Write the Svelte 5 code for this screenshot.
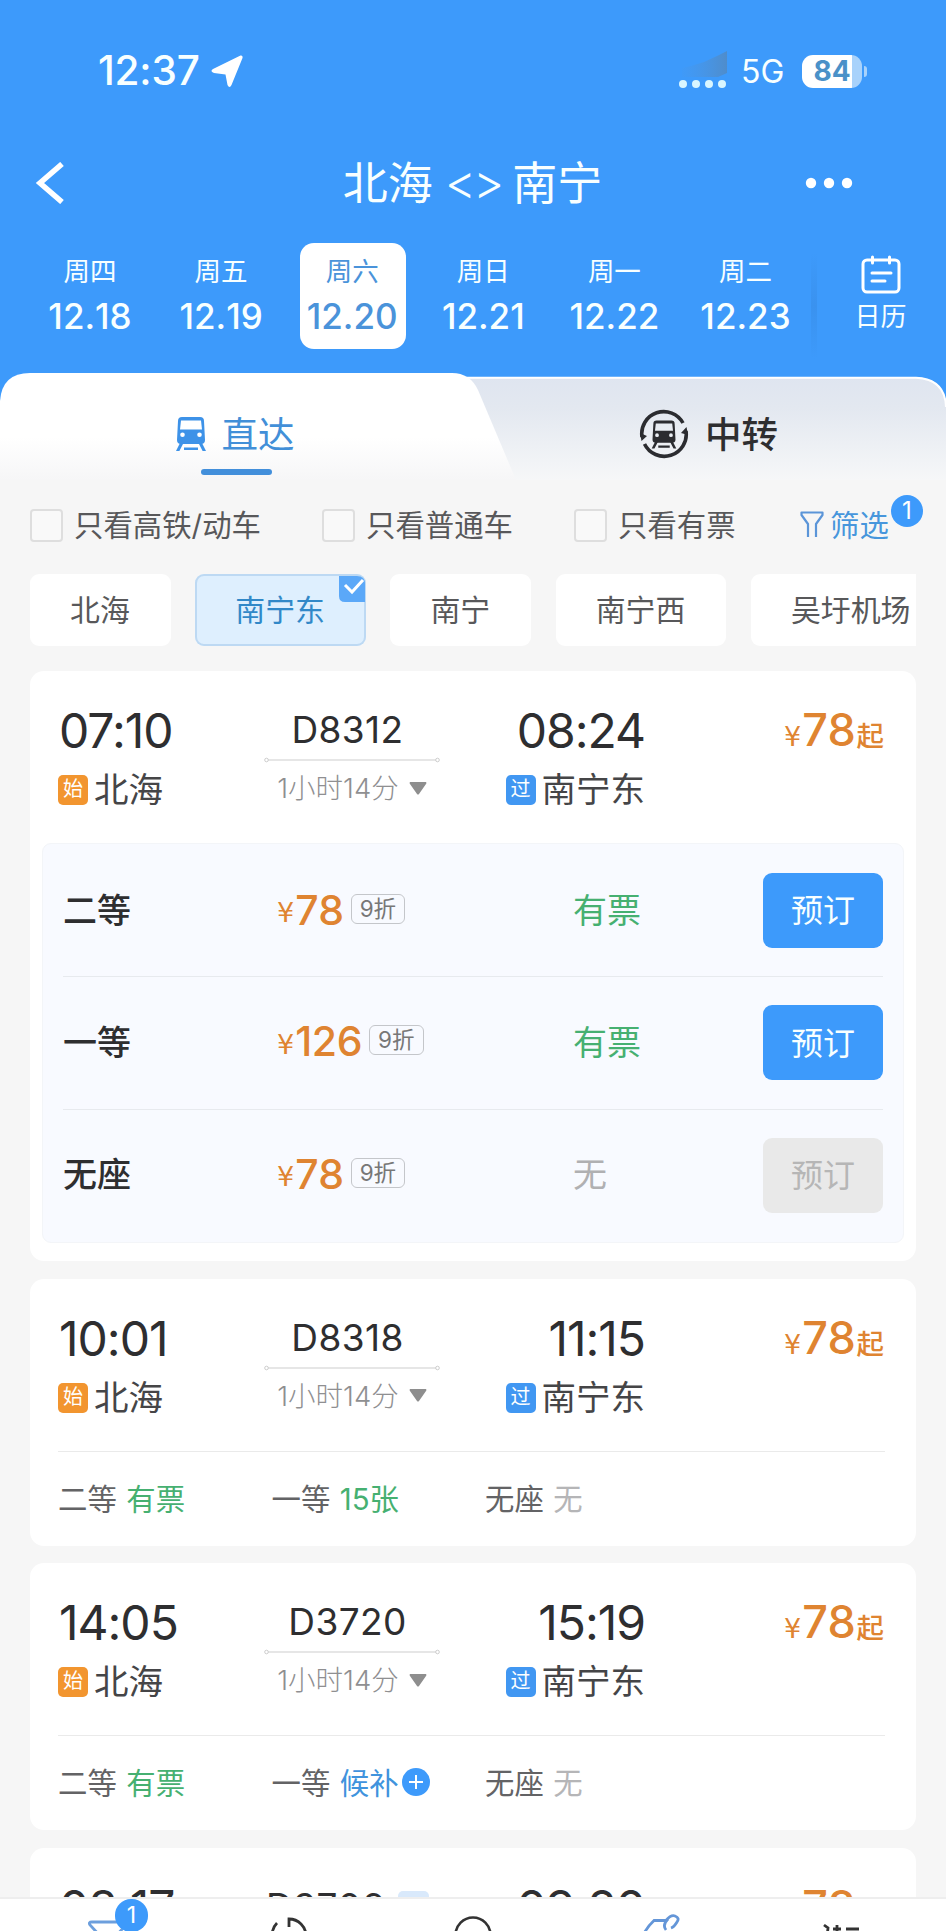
<script>
  const dates = [
    ['周四', '12.18'], ['周五', '12.19'], ['周六', '12.20'],
    ['周日', '12.21'], ['周一', '12.22'], ['周二', '12.23']
  ];
  const stations = ['北海', '南宁东', '南宁', '南宁西', '吴圩机场'];
  const classes = [
    { name: '二等', price: '78', state: '有票', open: true },
    { name: '一等', price: '126', state: '有票', open: true },
    { name: '无座', price: '78', state: '无', open: false }
  ];
  const trains = [
    { dep: '07:10', no: 'D8312', arr: '08:24', expanded: true },
    { dep: '10:01', no: 'D8318', arr: '11:15', seats: [['二等', '有票', 'ok'], ['一等', '15张', 'ok'], ['无座', '无', 'none']] },
    { dep: '14:05', no: 'D3720', arr: '15:19', seats: [['二等', '有票', 'ok'], ['一等', '候补', 'wait'], ['无座', '无', 'none']] },
    { dep: '08:17', no: 'D3706', arr: '09:20', tag: true, seats: [] }
  ];
</script>

{#snippet train()}
  <path fill-rule="evenodd" d="M6 0H24Q28 0 28 4L29 23Q29 27 25 27H5Q1 27 1 23L2 4Q2 0 6 0ZM5 3.5L4 12.5H26L25 3.5ZM6.5 15.5A2.3 2.3 0 1 0 6.5 20.100A2.3 2.3 0 1 0 6.5 15.5ZM23.500 15.5A2.3 2.3 0 1 0 23.500 20.100A2.3 2.3 0 1 0 23.500 15.5Z" />
  <path d="M4 26H7.500L3.400 34H0ZM22.500 26H26L30 34H26.600ZM8 30.500H22V33H8Z" />
{/snippet}

<div class="page">
  <header>
    <div class="status">
      <span class="clock">12:37</span>
      <svg class="loc" width="32" height="33" viewBox="0 0 32 33"><path d="M29.500 .5Q32 0 31.500 3L20.500 30Q18.500 34 16.500 30L14.500 19.500L3 18Q-1.500 16.500 2 14Z" fill="#fff" /></svg>
      <span class="grow"></span>
      <svg class="signal" width="50" height="38" viewBox="0 0 50 38">
        <defs><linearGradient id="sg" x1="0" x2="1"><stop offset="0" stop-color="#5a94cf" stop-opacity="0.06" /><stop offset="1" stop-color="#5a83ab" stop-opacity="0.6" /></linearGradient></defs>
        <path d="M4 26V17L13 15L26 11L39 5L49 0V22L40 26Z" fill="url(#sg)" />
        <g fill="#d9f6ff"><rect x="1" y="29" width="8" height="8" rx="4" /><rect x="14" y="29" width="8" height="8" rx="4" /><rect x="27" y="29" width="8" height="8" rx="4" /><rect x="40" y="29" width="8" height="8" rx="4" /></g>
      </svg>
      <span class="net">5G</span>
      <span class="battery">84</span><i class="nub"></i>
    </div>
    <div class="title">
      <svg width="30" height="42" viewBox="0 0 30 42"><path d="M27 2L5 21L27 40" fill="none" stroke="#fff" stroke-width="5.500" /></svg>
      <h1>北海 <b>&lt;&gt;</b> 南宁</h1>
      <svg width="48" height="12" viewBox="0 0 48 12" fill="#fff"><circle cx="6" cy="6" r="5.200" /><circle cx="24" cy="6" r="5.200" /><circle cx="42" cy="6" r="5.200" /></svg>
    </div>
    <div class="dates">
      {#each dates as d, i}
        <div class="day" class:on={i === 2}><span>{d[0]}</span><em>{d[1]}</em></div>
      {/each}
      <i class="fade"></i>
      <div class="cal">
        <svg width="40" height="39" viewBox="0 0 40 39" fill="none" stroke="#fff" stroke-width="3" stroke-linecap="round"><rect x="2" y="5" width="36" height="32" rx="4" /><path d="M11.500 2V8M28.500 2V8M11 18H30M11 26H24" /></svg>
        <span>日历</span>
      </div>
    </div>
  </header>

  <nav class="tabs">
    <svg class="tabbg" width="946" height="107" viewBox="0 0 946 107">
      <defs>
        <linearGradient id="g1" x1="0" x2="0" y1="0" y2="1"><stop offset="0" stop-color="#dfe5f0" /><stop offset="0.3" stop-color="#e3e8f0" /><stop offset="1" stop-color="#f6f7f8" /></linearGradient>
        <linearGradient id="g2" x1="0" x2="0" y1="0" y2="1"><stop offset="0.6" stop-color="#fff" /><stop offset="1" stop-color="#f6f6f7" /></linearGradient>
      </defs>
      <rect width="946" height="30" fill="#3d9afb" />
      <path d="M430 4H916Q946 6 946 34V107H430Z" fill="url(#g1)" />
      <path d="M440 4.800H916Q945 6 946 34" fill="none" stroke="#fff" stroke-width="2" />
      <path d="M0 107V28Q2 0 30 0H452Q470 0 478 17L516 107Z" fill="url(#g2)" />
    </svg>
    <div class="tab active">
      <svg width="30" height="34" viewBox="0 0 30 34" fill="#3d92e8">{@render train()}</svg>
      <span>直达</span>
    </div>
    <div class="tab">
      <svg width="50" height="50" viewBox="0 0 50 50" fill="#2b2c30">
        <g fill="none" stroke="#2b2c30" stroke-width="3.600"><path d="M3 28A22 22 0 0 1 44 14" /><path d="M47 22A22 22 0 0 1 5.500 35" /></g>
        <path d="M1 24L2.500 32L8 27ZM49 26L47.500 18L42 24Z" />
        <g transform="translate(12.700 11.600) scale(.82)">{@render train()}</g>
      </svg>
      <span>中转</span>
    </div>
  </nav>

  <div class="filters">
    <label class="f1"><i></i><span>只看高铁/动车</span></label>
    <label class="f2"><i></i><span>只看普通车</span></label>
    <label class="f3"><i></i><span>只看有票</span></label>
    <div class="sift">
      <svg width="24" height="27" viewBox="0 0 24 27" fill="none" stroke="#5b95d8" stroke-width="2.200" stroke-linejoin="round"><path d="M8 26V13L1.500 4V1.500H22.500V4L16 13V26" /></svg>
      <span>筛选</span><b class="count">1</b>
    </div>
  </div>

  <div class="chips">
    {#each stations as s, i}
      <div class="chip" class:picked={i === 1}>{s}{#if i === 1}<svg class="tick" width="26" height="26" viewBox="0 0 26 26"><path d="M0 0H18Q26 0 26 8V26H6Q0 26 0 20Z" fill="#5ba8f8" /><path d="M6 9L13 16L24 4" fill="none" stroke="#fff" stroke-width="3" /></svg>{/if}</div>
    {/each}
  </div>

  <main>
    {#each trains as t}
      <section class="card">
        <div class="head">
          <div class="col from"><strong>{t.dep}</strong><p><i class="mark start">始</i>北海</p></div>
          <div class="col mid">
            <div class="no">{t.no}{#if t.tag}<i class="tag"></i>{/if}</div>
            <svg class="rule" width="176" height="6" viewBox="0 0 176 6" fill="#fff" stroke="#cdcdcd"><path d="M4 3H172" stroke-width="1.200" /><circle cx="2.500" cy="3" r="1.800" /><circle cx="173.500" cy="3" r="1.800" /></svg>
            <div class="dur">1小时14分<svg width="18" height="13" viewBox="0 0 18 13"><path d="M1 0H17Q18 1 17 2L10 12Q9 13 8 12L1 2Q0 1 1 0Z" fill="#8e8e8e" /></svg></div>
          </div>
          <div class="col to"><strong>{t.arr}</strong><p><i class="mark pass">过</i>南宁东</p></div>
          <div class="price"><small>¥</small><b>78</b><span>起</span></div>
        </div>
        {#if t.expanded}
          <div class="panel">
            {#each classes as c}
              <div class="row">
                <span class="cls">{c.name}</span>
                <span class="fare"><small>¥</small><b>{c.price}</b><i>9折</i></span>
                <span class="state" class:none={!c.open}>{c.state}</span>
                <button class:off={!c.open}>预订</button>
              </div>
            {/each}
          </div>
        {:else if t.seats.length}
          <div class="seats">
            {#each t.seats as s}
              <div class="seat"><span>{s[0]}</span><em class={s[2]}>{s[1]}</em>{#if s[2] === 'wait'}<svg width="28" height="28" viewBox="0 0 28 28"><circle cx="14" cy="14" r="14" fill="#3d9afb" /><path d="M7 14H21M14 7V21" stroke="#fff" stroke-width="2" /></svg>{/if}</div>
            {/each}
          </div>
        {/if}
      </section>
    {/each}
  </main>

  <footer>
    <div class="item"><svg width="42" height="40" viewBox="0 0 42 40"><path d="M16 36V19L3 5Q1 2 5 2H38Q41 2 39 5L26 19V36" fill="none" stroke="#6c9fdd" stroke-width="2.800" /></svg><b class="count">1</b></div>
    <div class="item"><svg width="38" height="38" viewBox="0 0 38 38" fill="none" stroke="#333" stroke-width="2.800"><path d="M7 6Q2 11 2 19A17 17 0 0 0 19 36A17 17 0 0 0 19 2V10" /></svg></div>
    <div class="item"><svg width="38" height="38" viewBox="0 0 38 38" fill="none" stroke="#333" stroke-width="2.600"><circle cx="19" cy="19" r="17.500" /><path d="M19 15V22L25 26" /></svg></div>
    <div class="item train"><svg width="44" height="42" viewBox="0 0 44 42" fill="none" stroke="#6496d8" stroke-width="2.800"><path d="M3 22Q8 13 14 7.500H26Q31 1.500 35 3Q40 5 37 9Q34 14 31 15M26 17Q22 12 28 6" /></svg></div>
    <div class="item more"><svg width="42" height="34" viewBox="0 0 42 34" fill="none" stroke="#333" stroke-width="2.800"><path d="M2 2L6 5L5 14M11 6H19M15 2V16M24 6H37" /></svg></div>
  </footer>
</div>

<style>
  :global(body) { background: #f6f6f6; }
  .page { width: 946px; height: 1931px; overflow: hidden; display: flex; flex-direction: column; position: relative; background: #f6f6f6; font-family: Inter, "Noto Sans CJK SC", sans-serif; color: #2e2e30; font-kerning: none; }
  i, em { font-style: normal; }
  svg { display: block; flex: none; }
  header { height: 373px; flex: none; background: #3d9afb; color: #f8ffff; }
  .status { height: 142px; box-sizing: border-box; padding: 0 79px 0 98px; display: flex; align-items: center; }
  .clock { font-size: 40.500px; font-weight: 550; letter-spacing: -.2px; width: 104px; white-space: nowrap; margin-top: -2px; }
  .loc { margin-left: 9px; }
  .grow { flex: 1; }
  .signal { margin-right: 13px; margin-top: -2px; }
  .net { font-size: 32px; width: 61px; }
  .battery { width: 60px; height: 33px; border-radius: 11px; background: linear-gradient(90deg, #fff 83%, #a8d2fb 83%); color: #4a91c8; font-weight: 650; font-size: 28px; line-height: 32px; text-align: center; }
  .nub { width: 3px; height: 11px; border-radius: 0 3px 3px 0; background: #a8d2fb; margin-left: 2px; }
  .title { height: 82px; padding: 0 93px 0 35px; display: flex; align-items: center; }
  .title h1 { margin: 0; flex: 1; padding-left: 75px; text-align: center; font-size: 45px; line-height: 85px; font-weight: 400; display: flex; justify-content: center; white-space: nowrap; }
  .title h1 b { font-weight: 350; margin: 0 11px 0 12px; font-size: 48px; letter-spacing: -3px; line-height: 82px; }
  .dates { padding: 19px 0 0 38px; display: flex; }
  .day { width: 106px; height: 106px; margin-right: 25.100px; border-radius: 14px; text-align: center; display: flex; flex-direction: column; align-items: center; }
  .day span { font-size: 26.500px; line-height: 32px; padding-top: 12px; margin-left: -2px; }
  .day em { font-size: 35px; font-weight: 480; line-height: 40px; margin: 9px 0 0 -2px; white-space: nowrap; }
  .day.on { background: #fff; color: #4a93da; }
  .fade { width: 6px; height: 106px; margin: 10px 0 0 -14px; background: linear-gradient(180deg, #3a93f000, #3a92ef 50%, #3a93f000); }
  .cal { margin-left: 38px; margin-top: 12px; display: flex; flex-direction: column; align-items: center; font-size: 26px; line-height: 32px; }
  .cal span { margin-top: 7px; }
  .tabs { height: 107px; flex: none; display: flex; position: relative; }
  .tabbg { position: absolute; inset: 0; }
  .tab { width: 473px; position: relative; display: flex; justify-content: center; align-items: center; font-size: 36.500px; font-weight: 450; height: 121px; line-height: 50px; }
  .tab span { margin-top: 3px; }
  .tab:not(.active) svg { margin-right: 16px; margin-left: -2px; }
  .tab.active { color: #428fd8; font-weight: 400; }
  .tab.active svg { margin-right: 16px; margin-left: -3px; }
  .tab.active::after { content: ""; position: absolute; left: 201px; top: 96px; width: 71px; height: 6px; border-radius: 3px; background: #428fdb; }
  .filters { flex: none; display: flex; height: 94px; padding: 0 30px 3px; box-sizing: border-box; align-items: center; font-size: 29.400px; color: #58585a; white-space: nowrap; }
  .filters label { display: flex; align-items: center; }
  .filters span { margin-top: -6px; }
  .filters label i { width: 29px; height: 29px; border: 2px solid #dedede; border-radius: 4px; margin-right: 11px; background: #f9f9f9; }
  .f1 { width: 292px; } .f2 { width: 252px; } .f3 { width: 226px; }
  .sift { position: relative; display: flex; align-items: center; color: #4796dc; }
  .sift svg { margin-top: -3px; }
  .sift span { margin-left: 6px; }
  .count { position: absolute; width: 32px; height: 32px; line-height: 32px; border-radius: 16px; background: #3d9afb; color: #fff; font-size: 24px; font-weight: 400; text-align: center; }
  .sift .count { left: 91px; top: -13px; }
  .chips { flex: none; display: flex; margin: 0 30px; gap: 24.500px; height: 72px; overflow: hidden; }
  .chip { flex: none; padding: 0 41px 0 40px; line-height: 73px; background: #fff; border-radius: 9px; font-size: 29.900px; color: #58585a; position: relative; }
  .picked { background: #deeffe; box-shadow: inset 0 0 0 2px #bdd9f3; color: #3188c8; }
  .tick { position: absolute; right: 1px; top: 2px; }
  main { padding: 25px 30px 0; flex: none; display: flex; flex-direction: column; gap: 17.500px; }
  .card { background: #fff; border-radius: 14px; height: 267px; flex: none; }
  .card:first-child { height: 590px; }
  .head { height: 172px; display: flex; position: relative; }
  .col { display: flex; flex-direction: column; }
  .col strong { font-size: 48px; font-weight: 430; line-height: 50px; margin-top: 35px; letter-spacing: -1px; font-kerning: normal; }
  .col p { margin: 10px 0 0; display: flex; align-items: center; font-size: 34.500px; line-height: 48px; color: #454547; }
  .from { width: 233px; padding-left: 28px; box-sizing: border-box; }
  .from strong { margin-left: 1px; }
  .mid { width: 178px; align-items: center; }
  .no { font-size: 37px; line-height: 46px; margin-top: 36px; padding-right: 9px; display: flex; align-items: center; white-space: nowrap; letter-spacing: .4px; }
  .tag { margin-left: 13px; width: 31px; height: 32px; border-radius: 5px; background: #d9e9fb; }
  .rule { margin-top: 4px; }
  .dur { display: flex; align-items: center; font-size: 27.500px; line-height: 34px; margin-top: 8px; color: #8f8f91; font-weight: 300; white-space: nowrap; }
  .dur svg { margin-left: 10px; }
  .to { width: 204px; align-items: flex-end; }
  .mark { width: 30px; height: 30px; border-radius: 5px; color: #fff; font-size: 20px; line-height: 29px; text-align: center; margin-right: 6px; }
  .start { background: #f2952f; } .pass { background: #4197f2; }
  .price { flex: 1; padding: 32px 32px 0 0; display: flex; justify-content: flex-end; align-items: baseline; height: 54px; color: #df8431; }
  small { font-family: "DejaVu Sans", sans-serif; font-size: 27px; margin-right: 1px; }
  .price b { font-size: 45px; font-weight: 480; line-height: 54px; letter-spacing: -.4px; } .price span { font-size: 27.500px; font-weight: 500; margin-left: 1px; }
  .panel { margin: 0 12px; height: 400px; box-sizing: border-box; background: #f8faff; border: 1px solid #f3f5f8; border-radius: 9px; padding: 0 20px; }
  .row { height: 132.300px; box-sizing: border-box; display: flex; align-items: center; position: relative; }
  .row span { position: relative; margin-top: -3px; }
  .row + .row { border-top: 1px solid #e7eaee; }
  .row + .row span { margin-top: -5px; }
  .cls { width: 214px; font-size: 34px; font-weight: 450; }
  .fare { width: 296px; display: flex; align-items: center; color: #df8431; padding-top: 2px; }
  .fare small { margin-top: 6px; } .fare b { font-size: 41px; font-weight: 480; letter-spacing: -.4px; }
  .fare i { height: 28px; line-height: 27px; padding: 0 8px; border: 1.500px solid #c4c6ca; border-radius: 6px; font-size: 22.500px; color: #777; margin: -2px 0 0 7px; }
  .state { font-size: 34px; color: #46b071; } .state.none { color: #b0b0b2; }
  button { margin-left: auto; width: 120px; height: 75px; border: 0; border-radius: 9px; background: #3d9afb; color: #f8ffff; font: 400 32px Inter, "Noto Sans CJK SC", sans-serif; padding: 0 0 4px; }
  .off { background: #e9e9e9; color: #b6b6b6; }
  .seats { margin: 0 31px 0 28px; height: 90px; border-top: 1px solid #eaeaea; display: flex; align-items: center; font-size: 29.400px; color: #636365; }
  .seat { width: 213.500px; display: flex; align-items: center; }
  .seat em { margin-left: 9.500px; } .seat svg { margin-left: 3px; margin-top: 2px; }
  .ok { color: #46b071; } .none { color: #b5b5b7; } .wait { color: #4093dd; }
  footer { position: absolute; left: 0; right: 0; bottom: 0; height: 32px; overflow: hidden; border-top: 2px solid #eee; background: #fff; display: flex; align-items: flex-start; }
  .item { width: 189.200px; position: relative; display: flex; justify-content: center; padding-top: 17px; box-sizing: border-box; }
  .item:first-child { padding: 21px 0 0 27px; }
  .item:nth-child(2) { padding: 18px 0 0 10px; }
  .item .count { left: 115px; top: 0; width: 33px; height: 33px; line-height: 32px; font-size: 23px; }
  .item.train { padding-top: 14px; } .item.more { padding: 24px 16px 0 0; }
</style>
